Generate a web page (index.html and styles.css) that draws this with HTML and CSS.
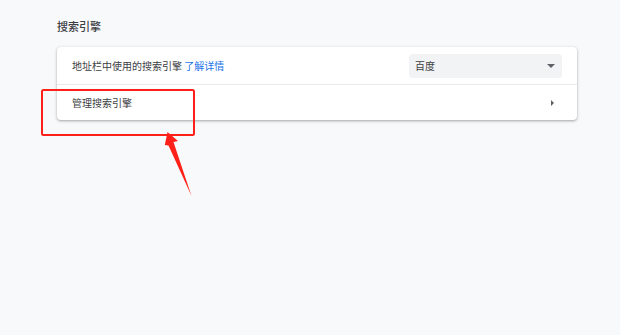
FILE: index.html
```html
<!DOCTYPE html>
<html lang="zh-CN">
<head>
    <meta charset="UTF-8">
    <meta name="viewport" content="width=device-width, initial-scale=1.0">
    <title>搜索引擎</title>
    <link rel="stylesheet" href="styles.css">
</head>
<body>
    <div class="page">
        <h2 class="section-title">搜索引擎</h2>
        <div class="card">
            <div class="row row-first">
                <div class="row-label">地址栏中使用的搜索引擎 <a href="#" class="learn-more">了解详情</a></div>
                <div class="select">
                    <span>百度</span>
                    <span class="select-arrow"></span>
                </div>
            </div>
            <div class="row row-sub">
                <div class="row-label">管理搜索引擎</div>
                <span class="sub-arrow"></span>
            </div>
        </div>
    </div>

    <!-- annotation drawn over the screenshot -->
    <svg class="annotation" width="620" height="335" viewBox="0 0 620 335">
        <rect x="42" y="90" width="152" height="45" rx="1.5" fill="none" stroke="#ff2119" stroke-width="2"/>
        <polygon points="167.5,132 178,141 173.5,142 191.5,196 168.5,145.5 164.8,145" fill="#ff2119"/>
    </svg>
</body>
</html>
```

FILE: styles.css
```css
body {
    margin: 0;
    background-color: #f8f9fa;
    font-family: "Noto Sans CJK SC", "Noto Sans", sans-serif;
    color: #3c4043;
    width: 620px;
    height: 335px;
    position: relative;
    overflow: hidden;
}

.page {
    width: 520px;
    padding: 19px 0 0 57px;
}

.section-title {
    margin: 0 0 14px;
    font-size: 11px;
    line-height: 14px;
    font-weight: 500;
    color: #3c4043;
}

.card {
    background-color: #fff;
    border-radius: 4px;
    box-shadow: 0 1px 2px rgba(60, 64, 67, 0.3), 0 1px 3px 1px rgba(60, 64, 67, 0.12);
}

.row {
    display: flex;
    align-items: center;
    justify-content: space-between;
    padding: 0 15px;
    font-size: 10px;
}

.row-first {
    height: 37px;
}

.row-sub {
    height: 35px;
    border-top: 1px solid #e8eaed;
}

.row-label {
    line-height: 14px;
}

.learn-more {
    color: #1a73e8;
    text-decoration: none;
}

.select {
    width: 153px;
    height: 24px;
    box-sizing: border-box;
    padding: 0 7px 0 6px;
    display: flex;
    align-items: center;
    justify-content: space-between;
    background-color: #f1f3f4;
    border-radius: 4px;
    font-size: 10px;
}

.select-arrow {
    width: 0;
    height: 0;
    border-left: 4px solid transparent;
    border-right: 4px solid transparent;
    border-top: 4px solid #5f6368;
    margin-top: 1px;
}

.sub-arrow {
    width: 0;
    height: 0;
    border-top: 3.5px solid transparent;
    border-bottom: 3.5px solid transparent;
    border-left: 3.5px solid #5f6368;
    margin-right: 8px;
}

.annotation {
    position: absolute;
    top: 0;
    left: 0;
    pointer-events: none;
}
```
